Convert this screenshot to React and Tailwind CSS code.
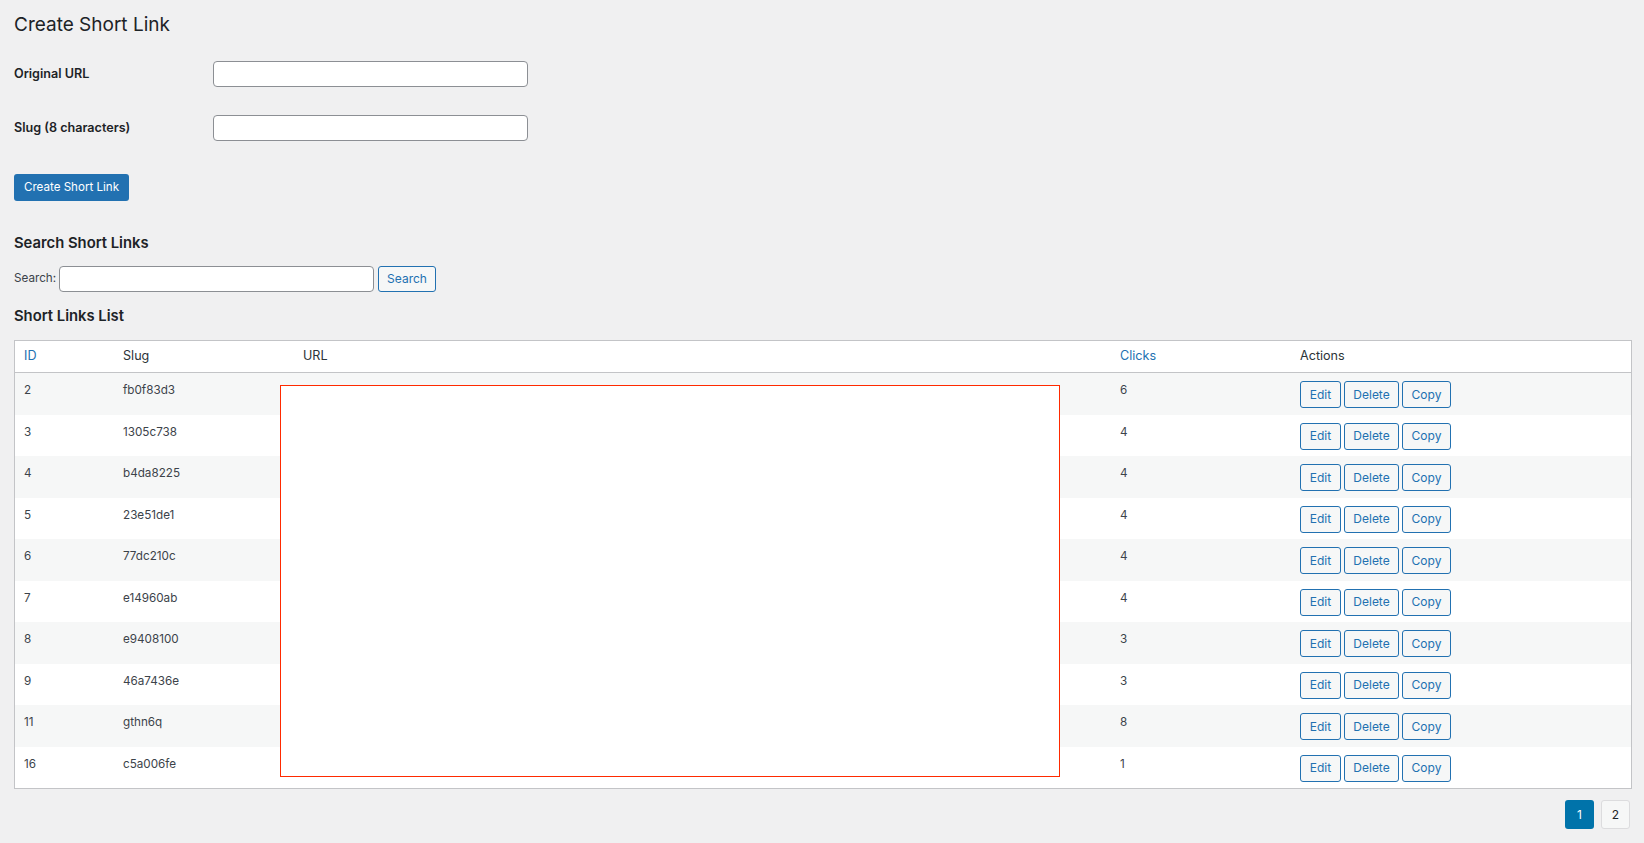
import React from "react";

const rows = [
  { id: 2, slug: "fb0f83d3", clicks: 6 },
  { id: 3, slug: "1305c738", clicks: 4 },
  { id: 4, slug: "b4da8225", clicks: 4 },
  { id: 5, slug: "23e51de1", clicks: 4 },
  { id: 6, slug: "77dc210c", clicks: 4 },
  { id: 7, slug: "e14960ab", clicks: 4 },
  { id: 8, slug: "e9408100", clicks: 3 },
  { id: 9, slug: "46a7436e", clicks: 3 },
  { id: 11, slug: "gthn6q", clicks: 8 },
  { id: 16, slug: "c5a006fe", clicks: 1 },
];

const cols = "grid grid-cols-[99px_180px_817px_180px_1fr]";

function SmallButton({ children, width }) {
  return (
    <button
      className={`h-[27px] ${width} rounded-[3px] border border-[#2271b1] bg-[#f6f7f7] text-[12px] leading-none text-[#2271b1]`}
    >
      {children}
    </button>
  );
}

export default function App() {
  return (
    <div
      className="min-h-screen bg-[#f0f0f1] pl-[14px] pr-[12px] text-[#3c434a]"
      style={{ fontFamily: "Inter, 'Noto Sans', sans-serif" }}
    >
      <h1 className="pt-[11px] text-[19px] leading-[28px] font-normal text-[#1d2327]">
        Create Short Link
      </h1>

      <div className="mt-[8px]">
        <div className="flex h-[54px] items-center">
          <label className="w-[199px] text-[12.6px] font-semibold text-[#1d2327]">
            Original URL
          </label>
          <input
            type="text"
            className="h-[26px] w-[315px] rounded-[4px] border border-[#8c8f94] bg-white px-2 outline-none"
          />
        </div>
        <div className="flex h-[54px] items-center">
          <label className="w-[199px] text-[12.6px] font-semibold text-[#1d2327]">
            Slug (8 characters)
          </label>
          <input
            type="text"
            className="h-[26px] w-[315px] rounded-[4px] border border-[#8c8f94] bg-white px-2 outline-none"
          />
        </div>
      </div>

      <button className="mt-[19px] h-[27px] w-[115px] rounded-[3px] bg-[#2271b1] text-[11.6px] leading-none text-white">
        Create Short Link
      </button>

      <h2 className="mt-[32px] text-[14.8px] leading-[20px] font-semibold text-[#1d2327]">
        Search Short Links
      </h2>

      <div className="mt-[13px] flex h-[26px] items-center">
        <span className="w-[45px] text-[11.7px] text-[#3c434a]">Search:</span>
        <input
          type="text"
          className="h-[26px] w-[315px] rounded-[4px] border border-[#8c8f94] bg-white px-2 outline-none"
        />
        <button className="ml-[4px] h-[26px] w-[58px] rounded-[3px] border border-[#2271b1] bg-[#f6f7f7] text-[12px] leading-none text-[#2271b1]">
          Search
        </button>
      </div>

      <h2 className="mt-[14px] text-[14.8px] leading-[20px] font-semibold text-[#1d2327]">
        Short Links List
      </h2>

      <div className="relative mt-[14px] border border-[#c3c4c7] bg-white">
        <div className={`${cols} h-[32px] items-center border-b border-[#c3c4c7] text-[12.6px] text-[#2c3338]`}>
          <div className="pl-[9px] text-[#2271b1]">ID</div>
          <div className="pl-[9px]">Slug</div>
          <div className="pl-[9px]">URL</div>
          <div className="pl-[9px] text-[#2271b1]">Clicks</div>
          <div className="pl-[9px]">Actions</div>
        </div>

        {rows.map((r, i) => (
          <div
            key={r.id}
            className={`${cols} h-[41.5px] items-start text-[11.7px] leading-[18px] ${
              i % 2 === 0 ? "bg-[#f6f7f7]" : "bg-white"
            }`}
          >
            <div className="pl-[9px] pt-[8px]">{r.id}</div>
            <div className="pl-[9px] pt-[8px]">{r.slug}</div>
            <div className="pl-[9px] pt-[8px]"></div>
            <div className="pl-[9px] pt-[8px]">{r.clicks}</div>
            <div className="flex gap-[3px] pl-[9px] pt-[8px]">
              <SmallButton width="w-[41px]">Edit</SmallButton>
              <SmallButton width="w-[55px]">Delete</SmallButton>
              <SmallButton width="w-[49px]">Copy</SmallButton>
            </div>
          </div>
        ))}

        {/* blanked-out URL column */}
        <div className="absolute left-[265px] top-[44px] h-[392px] w-[780px] border border-[#ff2a00] bg-white"></div>
      </div>

      <div className="mt-[11px] mr-[2px] flex justify-end gap-[7px]">
        <span className="flex h-[29px] w-[29px] items-center justify-center rounded-[3px] bg-[#0073aa] text-[12px] text-white">
          1
        </span>
        <span className="flex h-[29px] w-[29px] items-center justify-center rounded-[3px] border border-[#dcdcde] bg-[#f6f7f7] text-[12px] text-[#1d2327]">
          2
        </span>
      </div>
    </div>
  );
}
